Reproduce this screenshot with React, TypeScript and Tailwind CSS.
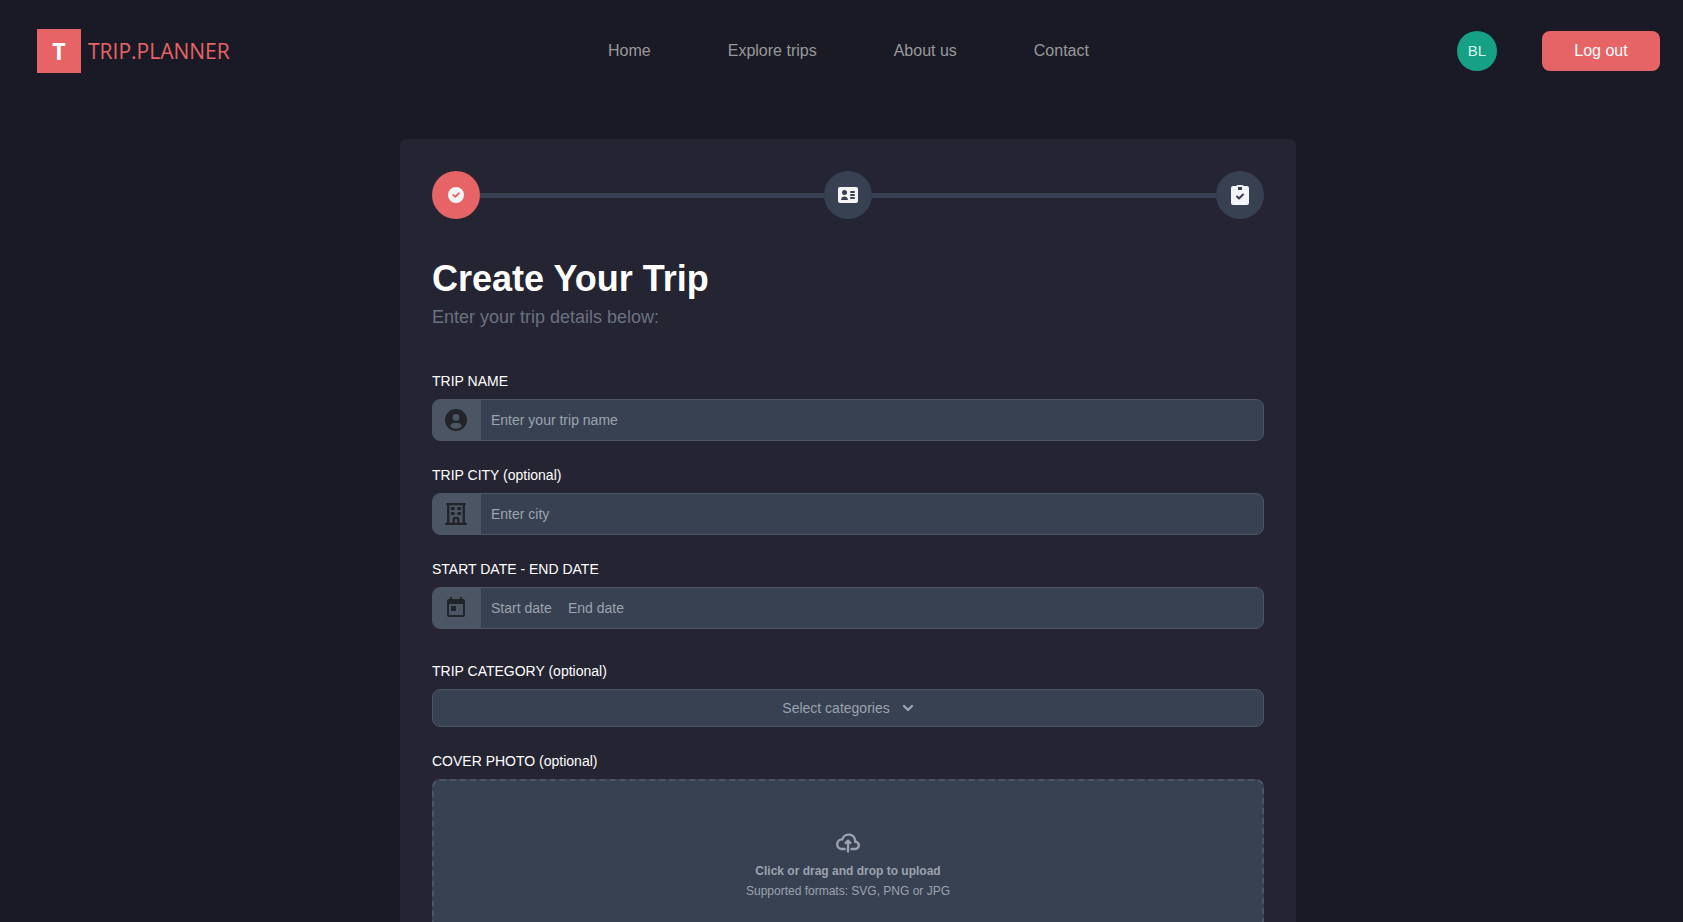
import type { ReactNode } from "react";
import { MdToday } from "react-icons/md";

const navLinks = ["Home", "Explore trips", "About us", "Contact"];

function CheckIcon() {
  return (
    <svg className="h-4 w-4" viewBox="0 0 20 20" fill="currentColor" aria-hidden="true">
      <path d="M10 0a10 10 0 1 0 10 10A10 10 0 0 0 10 0Zm4.4 8.6-4.5 4.5a1.2 1.2 0 0 1-1.6 0l-2.6-2.4a1.1 1.1 0 0 1 1.6-1.6L9 10.7l3.8-3.7a1.1 1.1 0 0 1 1.6 1.6Z" />
    </svg>
  );
}

function IdCardIcon() {
  return (
    <svg className="h-4 w-5" viewBox="0 0 20 16" fill="currentColor" aria-hidden="true">
      <path d="M18 0H2a2 2 0 0 0-2 2v12a2 2 0 0 0 2 2h16a2 2 0 0 0 2-2V2a2 2 0 0 0-2-2ZM6.5 3a2.5 2.5 0 1 1 0 5 2.5 2.5 0 0 1 0-5ZM3.014 13.021l.157-.625A3.427 3.427 0 0 1 6.5 9.571a3.426 3.426 0 0 1 3.322 2.805l.159.622-6.967.023ZM16 12h-3a1 1 0 0 1 0-2h3a1 1 0 0 1 0 2Zm0-3h-3a1 1 0 1 1 0-2h3a1 1 0 1 1 0 2Zm0-3h-3a1 1 0 1 1 0-2h3a1 1 0 1 1 0 2Z" />
    </svg>
  );
}

function ClipboardIcon() {
  return (
    <svg className="h-5 w-5" viewBox="0 0 18 20" fill="currentColor" aria-hidden="true">
      <path d="M16 1h-3.278A1.992 1.992 0 0 0 11 0H7a1.993 1.993 0 0 0-1.722 1H2a2 2 0 0 0-2 2v15a2 2 0 0 0 2 2h14a2 2 0 0 0 2-2V3a2 2 0 0 0-2-2ZM7 2h4v3H7V2Zm5.7 8.289-3.975 3.857a1 1 0 0 1-1.393 0L5.3 12.182a1.002 1.002 0 1 1 1.4-1.436l1.328 1.289 3.28-3.181a1 1 0 1 1 1.392 1.435Z" />
    </svg>
  );
}

function PersonIcon() {
  return (
    <svg className="h-[22px] w-[22px]" viewBox="0 0 22 22" fill="currentColor" fillRule="evenodd" aria-hidden="true">
      <path d="M11 0a11 11 0 1 0 0 22 11 11 0 0 0 0-22Zm0 5a3.4 3.4 0 1 1 0 6.8A3.4 3.4 0 0 1 11 5ZM5.2 17.4c.2-2.2 1.8-3.5 3.8-3.5h4c2 0 3.6 1.3 3.8 3.5A8.6 8.6 0 0 1 11 19.7a8.6 8.6 0 0 1-5.8-2.3Z" />
    </svg>
  );
}

function BuildingIcon() {
  return (
    <svg className="h-[22px] w-[22px]" viewBox="0 0 22 22" fill="none" stroke="currentColor" aria-hidden="true">
      <path d="M2 1.1h18M1.1 20.9h19.8" strokeWidth="2.2" strokeLinecap="round" />
      <path d="M3.2 1v20M18.8 1v20" strokeWidth="2.3" />
      <path d="M8.6 21v-4a2.1 2.1 0 0 1 2.1-2.1h.6a2.1 2.1 0 0 1 2.1 2.1v4" strokeWidth="2.2" />
      <path d="M6.6 4.6h2.4v1.8H6.6ZM13 4.6h2.4v1.8H13ZM6.6 9.6h2.4v1.8H6.6ZM13 9.6h2.4v1.8H13Z" fill="currentColor" strokeWidth="1.4" strokeLinejoin="round" />
    </svg>
  );
}

function CloudUploadIcon() {
  return (
    <svg className="h-5 w-6" viewBox="0 0 20 16" fill="none" stroke="currentColor" strokeWidth="2" strokeLinecap="round" strokeLinejoin="round" aria-hidden="true">
      <path d="M13 13h3a3 3 0 0 0 0-6h-.025A5.56 5.56 0 0 0 16 6.5 5.5 5.5 0 0 0 5.207 5.021C5.137 5.017 5.071 5 5 5a4 4 0 0 0 0 8h2.167M10 15V6m0 0L8 8m2-2 2 2" />
    </svg>
  );
}

function Step({ active = false, label, children }: { active?: boolean; label: string; children: ReactNode }) {
  return (
    <li
      aria-label={label}
      aria-current={active ? "step" : undefined}
      className={`flex h-12 w-12 shrink-0 items-center justify-center rounded-full text-[#f3f4f6] ${active ? "bg-[#e66465]" : "bg-[#374151]"}`}
    >
      {children}
    </li>
  );
}

function StepLine() {
  return <li aria-hidden="true" className="h-[5px] flex-1 bg-[#374151]" />;
}

const labelClass = "mb-2 block text-sm text-white";
const inputClass = "min-w-0 bg-transparent text-sm text-white placeholder:text-[#9ca3af] focus:outline-none";

function IconField({ icon, children }: { icon: ReactNode; children: ReactNode }) {
  return (
    <div className="flex h-[42px] overflow-hidden rounded-lg border border-[#4b5563] bg-[#374151]">
      <span className="flex w-12 shrink-0 items-center justify-center bg-[#4b5563] pr-0.5 text-[#212529]">{icon}</span>
      {children}
    </div>
  );
}

export default function App() {
  return (
    <div className="min-h-screen bg-[#1a1a26] font-['Liberation_Sans',Arial,sans-serif]">
      <header className="grid grid-cols-[1fr_auto_1fr] items-center pt-[29px] pr-[23px] pl-[37px]">
        <a href="#" className="flex items-center gap-[7px] justify-self-start font-['Open_Sans',sans-serif] text-[21px] text-[#e66465]">
          <span className="flex h-11 w-11 items-center justify-center bg-[#e66465] text-[23px] font-bold text-white">T</span>
          <span className="pt-0.5">TRIP.PLANNER</span>
        </a>
        <nav className="flex gap-[77px]">
          {navLinks.map((name) => (
            <a key={name} href="#" className="text-base text-[#999999]">
              {name}
            </a>
          ))}
        </nav>
        <div className="flex items-center gap-[45px] justify-self-end">
          <span className="flex h-10 w-10 items-center justify-center rounded-full bg-[#16a085] text-[15px] text-[#d5f5ec]">BL</span>
          <button type="button" className="h-10 w-[118px] rounded-lg bg-[#e66465] text-base text-white">
            Log out
          </button>
        </div>
      </header>

      <main className="pt-[66px] pl-[13px]">
        <form className="mx-auto max-w-4xl rounded-md bg-[#252432] p-8">
          <ol className="mb-9 flex items-center">
            <Step active label="Trip details">
              <CheckIcon />
            </Step>
            <StepLine />
            <Step label="Travellers">
              <IdCardIcon />
            </Step>
            <StepLine />
            <Step label="Review">
              <ClipboardIcon />
            </Step>
          </ol>

          <h1 className="text-4xl leading-12 font-bold text-white">Create Your Trip</h1>
          <p className="mb-10 text-lg leading-7 text-[#6b7280]">Enter your trip details below:</p>

          <div className="mb-6">
            <label htmlFor="trip-name" className={labelClass}>
              TRIP NAME
            </label>
            <IconField icon={<PersonIcon />}>
              <input id="trip-name" type="text" placeholder="Enter your trip name" className={`${inputClass} flex-1 px-2.5`} />
            </IconField>
          </div>

          <div className="mb-6">
            <label htmlFor="trip-city" className={labelClass}>
              TRIP CITY (optional)
            </label>
            <IconField icon={<BuildingIcon />}>
              <input id="trip-city" type="text" placeholder="Enter city" className={`${inputClass} flex-1 px-2.5`} />
            </IconField>
          </div>

          <div className="mb-8">
            <label htmlFor="start-date" className={labelClass}>
              START DATE - END DATE
            </label>
            <IconField icon={<MdToday size={24} />}>
              <input id="start-date" type="text" placeholder="Start date" className={`${inputClass} w-[87px] pl-2.5`} />
              <input type="text" aria-label="End date" placeholder="End date" className={`${inputClass} flex-1 pr-2.5`} />
            </IconField>
          </div>

          <div className="mb-6">
            <label htmlFor="trip-category" className={labelClass}>
              TRIP CATEGORY (optional)
            </label>
            <div className="flex h-[38px] items-center justify-center gap-3 rounded-lg border border-[#4b5563] bg-[#374151] text-[#9ca3af]">
              <select id="trip-category" className="field-sizing-content appearance-none bg-transparent text-sm focus:outline-none">
                <option>Select categories</option>
              </select>
              <svg className="h-2 w-3" viewBox="0 0 12 8" fill="none" stroke="currentColor" strokeWidth="2.4" strokeLinejoin="round" strokeLinecap="round" aria-hidden="true">
                <path d="m2 2 4 4 4-4" />
              </svg>
            </div>
          </div>

          <div>
            <label htmlFor="cover-photo" className={labelClass}>
              COVER PHOTO (optional)
            </label>
            <label
              htmlFor="cover-photo"
              className="flex h-44 cursor-pointer flex-col items-center justify-center rounded-lg border-2 border-dashed border-[#4b5563] bg-[#374151] pb-0.5 text-xs text-[#9ca3af]"
            >
              <CloudUploadIcon />
              <span className="mt-2.5 mb-1 font-bold">Click or drag and drop to upload</span>
              <span>Supported formats: SVG, PNG or JPG</span>
              <input id="cover-photo" type="file" accept=".svg,.png,.jpg" className="sr-only" />
            </label>
          </div>
        </form>
      </main>
    </div>
  );
}
